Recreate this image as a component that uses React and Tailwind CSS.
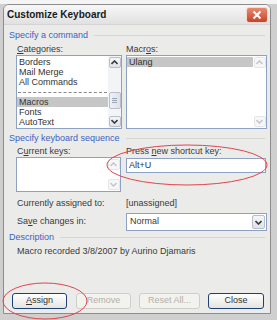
import React from 'react';

const font = { fontFamily: '"Liberation Sans", Arial, sans-serif' };

function Chevron({ up, faint }) {
  return (
    <svg width="7" height="5" viewBox="0 0 7 5">
      <path
        d={up ? 'M0.5 4 L3.5 1 L6.5 4' : 'M0.5 1 L3.5 4 L6.5 1'}
        fill="none"
        stroke={faint ? '#c4c8d0' : '#3b3b3b'}
        strokeWidth="1.6"
      />
    </svg>
  );
}

function ScrollBtn({ up, faint }) {
  return (
    <div
      className={`w-[12px] h-[11px] flex items-center justify-center rounded-[2px] border ${
        faint ? 'border-[#e4e6ea] bg-[#f6f7f9]' : 'border-[#b9bec8] bg-gradient-to-b from-[#f4f6fa] to-[#dfe3ea]'
      }`}
    >
      <Chevron up={up} faint={faint} />
    </div>
  );
}

function Header({ children }) {
  return (
    <div className="flex items-center h-[11px] pl-[5px] pr-[5px]">
      <span className="text-[#3a63c4] text-[9px] leading-[11px] whitespace-nowrap">{children}</span>
      <div className="flex-1 ml-[6px] h-px bg-[#d6d6d0]" />
    </div>
  );
}

function Btn({ children, w, disabled, className = '' }) {
  return (
    <div
      className={`h-[16px] flex items-center justify-center rounded-[3px] border text-[9px] ${
        disabled
          ? 'border-[#cfcfc8] bg-[#f2f2ef] text-[#b2b0a6]'
          : 'border-[#1f3f78] bg-gradient-to-b from-[#ffffff] to-[#e4e4df] text-[#333]'
      } ${className}`}
      style={{ width: w }}
    >
      {children}
    </div>
  );
}

export default function App() {
  const cats = ['Borders', 'Mail Merge', 'All Commands'];
  return (
    <div className="relative w-[277px] h-[320px] overflow-hidden bg-[#cfcfcf]" style={font}>
      <div className="h-[4px] bg-[#f4f4f4]" />
      <div className="ml-[3px] w-[268px] h-[310px] border border-[#8c8c8c] rounded-t-[6px] bg-[#ebebea] flex flex-col">
        {/* title bar */}
        <div className="h-[20px] flex items-center justify-between pl-[3px] pr-[2px] rounded-t-[5px] bg-gradient-to-b from-[#f7f7f7] to-[#e1e1e1] border-b border-[#d4d4d4]">
          <span className="text-[10px] font-bold text-[#1a1a1a]">Customize Keyboard</span>
          <div className="w-[22px] h-[16px] rounded-[3px] border border-[#f2d8d0] bg-gradient-to-b from-[#e88a6e] to-[#c5412a] flex items-center justify-center">
            <svg width="10" height="10" viewBox="0 0 10 10">
              <path d="M1.5 1.5 L8.5 8.5 M8.5 1.5 L1.5 8.5" stroke="#fff" strokeWidth="2" />
            </svg>
          </div>
        </div>

        <div className="mt-[5px]">
          <Header>Specify a command</Header>
        </div>

        <div className="mt-[3px] flex h-[10px] text-[9px] leading-[10px] text-[#3a3a3a]">
          <span className="ml-[13px] w-[109px]"><span className="underline">C</span>ategories:</span>
          <span>Macr<span className="underline">o</span>s:</span>
        </div>

        <div className="mt-[1px] flex h-[74px]">
          <div className="ml-[12px] w-[106px] h-[74px] border border-[#8da2c2] bg-white flex">
            <div className="flex-1 flex flex-col pt-[1px] text-[9px] leading-[10px] text-[#333]">
              {cats.map((c) => (
                <div key={c} className="h-[10px] pl-[2px]">{c}</div>
              ))}
              <div className="h-[10px] flex items-center px-[1px]">
                <div className="w-full border-t border-dashed border-[#888]" />
              </div>
              <div className="h-[10px] pl-[2px] bg-[#c6c6c6]">Macros</div>
              <div className="h-[10px] pl-[2px]">Fonts</div>
              <div className="h-[10px] pl-[2px]">AutoText</div>
            </div>
            <div className="w-[13px] flex flex-col items-center py-[1px] bg-[#f3f4f6]">
              <ScrollBtn up />
              <div className="mt-[24px] w-[12px] h-[17px] rounded-[2px] border border-[#b9bec8] bg-gradient-to-r from-[#eef1f6] to-[#dde2ea] flex flex-col items-center justify-center gap-[1px]">
                <div className="w-[5px] h-px bg-[#9aa3b3]" />
                <div className="w-[5px] h-px bg-[#9aa3b3]" />
                <div className="w-[5px] h-px bg-[#9aa3b3]" />
              </div>
              <div className="flex-1" />
              <ScrollBtn />
            </div>
          </div>
          <div className="ml-[4px] w-[141px] h-[74px] border border-[#8da2c2] bg-white flex">
            <div className="flex-1 pt-[1px] text-[9px] leading-[10px] text-[#333]">
              <div className="h-[10px] pl-[2px] bg-[#c6c6c6]">Ulang</div>
            </div>
            <div className="w-[13px] flex flex-col items-center justify-between py-[1px]">
              <ScrollBtn up faint />
              <ScrollBtn faint />
            </div>
          </div>
        </div>

        <div className="mt-[4px]">
          <Header>Specify keyboard sequence</Header>
        </div>

        <div className="mt-[2px] flex h-[10px] text-[9px] leading-[10px] text-[#3a3a3a]">
          <span className="ml-[13px] w-[109px]">C<span className="underline">u</span>rrent keys:</span>
          <span>Press <span className="underline">n</span>ew shortcut key:</span>
        </div>

        <div className="mt-[1px] flex h-[35px]">
          <div className="ml-[12px] w-[105px] h-[35px] border border-[#8da2c2] bg-white flex">
            <div className="flex-1" />
            <div className="w-[13px] flex flex-col items-center justify-between py-[1px]">
              <ScrollBtn up faint />
              <ScrollBtn faint />
            </div>
          </div>
          <div className="ml-[5px] mt-[1px] w-[140px] h-[15px] border border-[#8da2c2] bg-white pl-[2px] text-[9px] leading-[13px] text-[#333]">
            Alt+U
          </div>
        </div>

        <div className="mt-[6px] flex h-[10px] text-[9px] leading-[10px] text-[#3a3a3a]">
          <span className="ml-[13px] w-[109px]">Currently assigned to:</span>
          <span>[unassigned]</span>
        </div>

        <div className="mt-[5px] flex items-center h-[18px] text-[9px] text-[#3a3a3a]">
          <span className="ml-[13px] w-[109px]">Sa<span className="underline">v</span>e changes in:</span>
          <div className="w-[141px] h-[18px] border border-[#8da2c2] bg-white flex items-center">
            <span className="flex-1 pl-[3px]">Normal</span>
            <div className="w-[13px] h-[14px] mr-[1px] rounded-[2px] border border-[#b9bec8] bg-gradient-to-b from-[#f4f6fa] to-[#dfe3ea] flex items-center justify-center">
              <Chevron />
            </div>
          </div>
        </div>

        <div className="mt-[1px]">
          <Header>Description</Header>
        </div>

        <div className="mt-[3px] h-[10px] ml-[13px] text-[9px] leading-[10px] text-[#3a3a3a]">
          Macro recorded 3/8/2007 by Aurino Djamaris
        </div>

        <div className="mt-[37px] flex">
          <Btn w={55} className="ml-[8px]"><span className="underline">A</span>ssign</Btn>
          <Btn w={55} disabled className="ml-[9px]">Remove</Btn>
          <Btn w={61} disabled className="ml-[8px]">Reset All...</Btn>
          <Btn w={56} className="ml-[8px]">Close</Btn>
        </div>
      </div>

      <svg className="absolute left-0 top-0 pointer-events-none" width="277" height="320">
        <ellipse cx="187" cy="165" rx="80" ry="20" fill="none" stroke="#e0454c" strokeWidth="1" />
        <ellipse cx="45" cy="301" rx="42" ry="18" fill="none" stroke="#e0454c" strokeWidth="1" />
      </svg>
    </div>
  );
}
